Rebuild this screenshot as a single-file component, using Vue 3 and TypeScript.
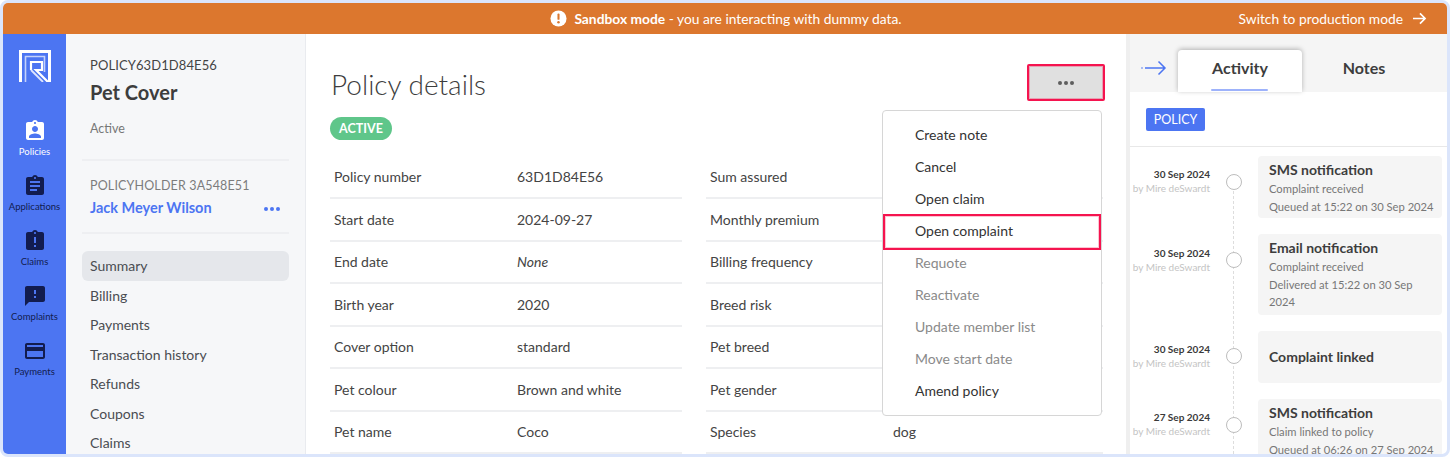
<script setup lang="ts">
const clip = 'M19 3h-4.18C14.4 1.84 13.3 1 12 1c-1.3 0-2.4.84-2.82 2H5c-1.1 0-2 .9-2 2v14c0 1.1.9 2 2 2h14c1.1 0 2-.9 2-2V5c0-1.1-.9-2-2-2z'
const hole = 'm-7 0c.55 0 1 .45 1 1s-.45 1-1 1-1-.45-1-1 .45-1 1-1z'
const nav = ['Summary','Billing','Payments','Transaction history','Refunds','Coupons','Claims']
const rail = [
  { label: 'Policies', d: clip + 'm-7 0c.55 0 1 .45 1 1s-.45 1-1 1-1-.45-1-1 .45-1 1-1zm0 4c1.66 0 3 1.34 3 3s-1.34 3-3 3-3-1.34-3-3 1.34-3 3-3zm6 12H6v-1.4c0-2 4-3.1 6-3.1s6 1.1 6 3.1V19z', active: true },
  { label: 'Applications', d: clip + hole + 'm2 14H7v-2h7v2zm3-4H7v-2h10v2zm0-4H7V7h10v2z', active: false },
  { label: 'Claims', d: clip + 'm-6 15h-2v-2h2v2zm0-4h-2V8h2v6zm-1-9c-.55 0-1-.45-1-1s.45-1 1-1 1 .45 1 1-.45 1-1 1z', active: false },
  { label: 'Complaints', d: 'M20 2H4c-1.1 0-1.99.9-1.99 2L2 22l4-4h14c1.1 0 2-.9 2-2V4c0-1.1-.9-2-2-2zm-7 12h-2v-2h2v2zm0-4h-2V6h2v4z', active: false },
  { label: 'Payments', d: 'M20 4H4c-1.11 0-1.99.89-1.99 2L2 18c0 1.11.89 2 2 2h16c1.11 0 2-.89 2-2V6c0-1.11-.89-2-2-2zm0 14H4v-6h16v6zm0-10H4V6h16v2z', active: false },
]
const left = [
  ['Policy number','63D1D84E56'],['Start date','2024-09-27'],['End date','None'],['Birth year','2020'],
  ['Cover option','standard'],['Pet colour','Brown and white'],['Pet name','Coco'],
]
const right = [
  ['Sum assured',''],['Monthly premium',''],['Billing frequency',''],['Breed risk',''],
  ['Pet breed',''],['Pet gender',''],['Species','dog'],
]
const menu = [
  { t: 'Create note', off: false },{ t: 'Cancel', off: false },{ t: 'Open claim', off: false },{ t: 'Open complaint', off: false },
  { t: 'Requote', off: true },{ t: 'Reactivate', off: true },{ t: 'Update member list', off: true },{ t: 'Move start date', off: true },{ t: 'Amend policy', off: false },
]
const events = [
  { date: '30 Sep 2024', title: 'SMS notification', lines: ['Complaint received','Queued at 15:22 on 30 Sep 2024'], cls: 'e1' },
  { date: '30 Sep 2024', title: 'Email notification', lines: ['Complaint received','Delivered at 15:22 on 30 Sep 2024'], cls: 'e2' },
  { date: '30 Sep 2024', title: 'Complaint linked', lines: [], cls: 'e3' },
  { date: '27 Sep 2024', title: 'SMS notification', lines: ['Claim linked to policy','Queued at 06:26 on 27 Sep 2024'], cls: 'e4' },
]
</script>

<template>
  <div class="frame">
    <header class="banner">
      <div class="banner-msg">
        <svg class="warn" viewBox="0 0 18 18" width="17" height="17">
          <circle cx="9" cy="9" r="8.5" fill="#fff" />
          <rect x="7.9" y="3.8" width="2.2" height="6.6" rx="1" fill="#dc772e" />
          <circle cx="9" cy="13" r="1.3" fill="#dc772e" />
        </svg>
        <span><b>Sandbox mode</b> - you are interacting with dummy data.</span>
      </div>
      <div class="switch">
        Switch to production mode
        <svg viewBox="0 0 16 14" width="15" height="13" fill="none" stroke="#fff" stroke-width="1.8">
          <path d="M1 7h13M8.5 1.5 14 7l-5.5 5.5" />
        </svg>
      </div>
    </header>
    <div class="body">
      <aside class="rail">
        <svg class="logo" viewBox="0 0 32 32" width="32" height="32" fill="none" stroke="#fff">
          <path d="M1.5 32V1.5h29V32" stroke-width="3" />
          <path d="M6.5 32V6.5h19V22" stroke="#c4d2fb" stroke-width="1.6" />
          <path d="M12 20V12h11v8h-6l12 12" stroke-width="2.2" />
          <path d="M12 20l12 12" stroke="#dfe6fd" stroke-width="1.8" />
        </svg>
        <div v-for="r in rail" :key="r.label" class="rail-item" :class="{ active: r.active }">
          <svg viewBox="0 0 24 24" width="24" height="24" class="rail-icon">
            <path fill="currentColor" :d="r.d" />
          </svg>
          <span>{{ r.label }}</span>
        </div>
      </aside>
      <section class="side">
        <div class="side-head">
          <div class="pol-id">POLICY63D1D84E56</div>
          <div class="pol-name">Pet Cover</div>
          <div class="pol-status">Active</div>
        </div>
        <div class="holder">
          <div class="holder-id">POLICYHOLDER 3A548E51</div>
          <div class="holder-row">
            <span class="holder-name">Jack Meyer Wilson</span>
            <span class="dots blue"><i></i><i></i><i></i></span>
          </div>
        </div>
        <nav class="nav">
          <div v-for="(n, i) in nav" :key="n" class="nav-item" :class="{ on: i === 0 }">{{ n }}</div>
        </nav>
      </section>
      <main class="main">
        <div class="main-head">
          <h1>Policy details</h1>
          <button class="more"><span class="dots grey"><i></i><i></i><i></i></span></button>
        </div>
        <span class="status">ACTIVE</span>
        <div class="tables">
          <div class="table">
            <div v-for="row in left" :key="row[0]" class="row">
              <span class="k">{{ row[0] }}</span>
              <span class="v" :class="{ none: row[1] === 'None' }">{{ row[1] }}</span>
            </div>
          </div>
          <div class="table">
            <div v-for="row in right" :key="row[0]" class="row">
              <span class="k">{{ row[0] }}</span>
              <span class="v">{{ row[1] }}</span>
            </div>
          </div>
        </div>
        <div class="menu">
          <div v-for="m in menu" :key="m.t" class="menu-item" :class="{ off: m.off, hl: m.t === 'Open complaint' }">{{ m.t }}</div>
        </div>
      </main>
      <aside class="activity">
        <div class="tabs">
          <svg class="back" viewBox="0 0 26 16" width="26" height="16" fill="none" stroke="#4c75f2" stroke-width="1.5">
            <path d="M4 8h20M17.5 1.5 24 8l-6.5 6.5" />
            <circle cx="1" cy="8" r=".8" fill="#4c75f2" stroke="none" />
          </svg>
          <div class="tab on">Activity<span class="bar"></span></div>
          <div class="tab">Notes</div>
        </div>
        <div class="filter"><span class="tag">POLICY</span></div>
        <div class="timeline">
          <div v-for="e in events" :key="e.title + e.date + e.cls" class="event" :class="e.cls">
            <div class="when">
              <div class="date">{{ e.date }}</div>
              <div class="by">by Mire deSwardt</div>
            </div>
            <div class="node"><span class="circle"></span></div>
            <div class="card">
              <div class="c-title">{{ e.title }}</div>
              <div v-for="l in e.lines" :key="l" class="c-line">{{ l }}</div>
            </div>
          </div>
        </div>
      </aside>
    </div>
  </div>
</template>

<style>
html, body { margin: 0; height: 457px; overflow: hidden; background: #fff; }
</style>

<style scoped>
* { box-sizing: border-box; }
.frame {
  width: 1450px; height: 457px; border: 3px solid #dbe5fb; border-radius: 8px; overflow: hidden;
  display: flex; flex-direction: column; font-family: Lato, "Open Sans", sans-serif; color: #3d3d3d; background: #fff;
}
.banner {
  height: 31px; flex: none; background: #dc772e; color: #fff; position: relative;
  display: flex; align-items: center; justify-content: center; font-size: 13.8px; padding-left: 3px;
}
.banner-msg { display: flex; align-items: center; gap: 7px; margin-left: -1px; }
.banner b { font-weight: 700; }
.switch { position: absolute; right: 20px; top: 0; height: 100%; display: flex; align-items: center; gap: 9px; }
.body { flex: 1; display: flex; min-height: 0; }
.rail { width: 63px; flex: none; background: #4c75f2; display: flex; flex-direction: column; align-items: center; padding-top: 16px; }
.logo { margin-bottom: 37px; flex: none; }
.rail-item { height: 55px; display: flex; flex-direction: column; align-items: center; color: #121c4f; font-size: 9.5px; }
.rail-item.active { color: #fff; }
.rail-icon { display: block; margin-bottom: 2.5px; flex: none; }
.side { width: 240px; flex: none; background: #f6f7f9; border-right: 1px solid #e9ebef; padding: 0 16px; overflow: hidden; }
.side-head { height: 127px; padding: 23px 0 0 8px; border-bottom: 2px solid #eeeff2; }
.pol-id { font-size: 13px; color: #444; line-height: 17px; letter-spacing: .1px; }
.pol-name { font-size: 20px; font-weight: 700; margin-top: 5px; line-height: 26px; color: #3d3d3d; }
.pol-status { font-size: 12.5px; color: #777; margin-top: 16px; line-height: 16px; }
.holder { height: 73px; padding: 16px 8px 0; border-bottom: 2px solid #eeeff2; }
.holder-id { font-size: 12.5px; color: #7c7c7c; line-height: 17px; letter-spacing: .15px; }
.holder-row { display: flex; justify-content: space-between; align-items: center; margin-top: 4px; }
.holder-name { font-size: 14.5px; font-weight: 700; color: #4c75f2; line-height: 19px; }
.dots { display: inline-flex; gap: 2px; }
.dots i { width: 4px; height: 4px; border-radius: 50%; background: currentColor; display: block; }
.dots.blue { color: #4c75f2; margin: 3px 1px 0 0; }
.dots.grey { color: #5e5e5e; }
.nav { padding-top: 17px; }
.nav-item { height: 29.5px; line-height: 29.5px; padding-left: 8px; font-size: 14px; color: #4a4d52; border-radius: 6px; }
.nav-item.on { background: #e5e7eb; }
.main { width: 820px; flex: none; position: relative; padding: 0 24px 0 24px; overflow: hidden; }
.main-head { height: 74px; display: flex; justify-content: space-between; align-items: flex-start; }
h1 { margin: 30px 0 0 1px; font-size: 28px; font-weight: 300; line-height: 40px; color: #3d3d3d; }
.more {
  margin-top: 30px; margin-right: -3px; width: 78px; height: 37px; background: #e0e0e0; border: 2px solid #f5144f; border-radius: 2px;
  box-shadow: inset 0 0 0 1px rgba(245,20,79,.3);
  display: flex; align-items: center; justify-content: center; padding: 0;
}
.status {
  display: block; width: 62px; height: 23px; background: #5fc68a; color: #fff; border-radius: 12px;
  font-size: 12.5px; font-weight: 700; text-align: center; line-height: 23px; margin-top: 9px;
}
.tables { display: grid; grid-template-columns: 352px 397px; column-gap: 24px; margin-top: 16.5px; }
.row { height: 42.5px; display: flex; align-items: center; border-bottom: 2px solid #eeeff1; font-size: 14px; color: #444; padding-left: 4px; }
.k { width: 183px; flex: none; }
.none { font-style: italic; }
.menu {
  position: absolute; left: 576px; top: 76px; width: 220px; height: 306px; background: #fff; border: 1px solid #d6d6d6; border-radius: 4px;
  padding: 8px 0;
}
.menu-item { height: 32px; line-height: 32px; padding-left: 32px; font-size: 14px; color: #333; }
.menu-item.off { color: #8a8a8a; }
.menu-item.hl { height: 36px; line-height: 30px; margin: -1px 0 -3px; padding-left: 30px; border: 2px solid #f5144f; box-shadow: inset 0 0 0 1px rgba(245,20,79,.25); }
.activity { flex: 1; min-width: 0; border-left: 4px solid #efefef; display: flex; flex-direction: column; overflow: hidden; }
.tabs { height: 58px; flex: none; background: #f5f5f5; display: flex; align-items: flex-end; padding-left: 48px; position: relative; }
.back { position: absolute; left: 11px; top: 26px; }
.tab { width: 124px; height: 42px; display: flex; align-items: center; justify-content: center; font-size: 16px; font-weight: 700; color: #3d3d3d; position: relative; padding-bottom: 8px; }
.tab.on { background: #fff; border-radius: 4px 4px 0 0; box-shadow: 0 -1px 5px rgba(0,0,0,.28); }
.bar { position: absolute; left: 33px; right: 34px; bottom: 1px; height: 2px; background: #9db2fb; border-radius: 1px; }
.filter { height: 55px; flex: none; padding: 16px 0 0 16px; border-bottom: 1px solid #e8e8e8; }
.tag { display: block; width: 59px; height: 23px; background: #4c75f2; color: #fff; font-size: 12.5px; line-height: 23px; text-align: center; border-radius: 2px; }
.timeline { flex: 1; position: relative; padding-top: 9px; overflow: hidden; }
.timeline::before { content: ""; position: absolute; left: 103px; top: 34px; bottom: 0; border-left: 1px dashed #ddd; }
.event { display: flex; position: relative; margin-bottom: 16px; margin-right: 5px; }
.e1 { height: 62px; }
.e2 { height: 81px; }
.e3 { height: 52px; }
.e4 { height: 80px; }
.when { width: 80px; flex: none; text-align: right; }
.e1 .when { padding-top: 11px; }
.e2 .when { padding-top: 12px; }
.e3 .when { padding-top: 11px; }
.e4 .when { padding-top: 11px; }
.date { font-size: 10px; font-weight: 700; line-height: 14px; color: #3a3a3a; white-space: nowrap; }
.by { font-size: 10px; color: #c4c4c4; line-height: 15px; white-space: nowrap; }
.node { width: 48px; flex: none; display: flex; justify-content: center; padding-top: 18px; }
.e3 .node { padding-top: 17px; }
.circle { width: 16px; height: 16px; border-radius: 50%; background: #fff; border: 1px solid #bdbdbd; display: block; }
.card { flex: 1; background: #f5f5f5; border-radius: 4px; padding: 5px 8px 5px 11px; min-width: 0; }
.e3 .card { display: flex; align-items: center; padding-top: 0; padding-bottom: 0; }
.c-title { font-size: 14px; font-weight: 700; line-height: 18px; color: #3d3d3d; }
.c-line { font-size: 11.2px; line-height: 17.5px; color: #777; }
.c-title + .c-line { margin-top: 1px; }
</style>
